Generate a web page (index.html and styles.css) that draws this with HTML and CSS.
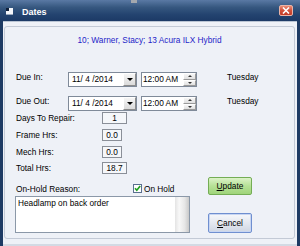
FILE: index.html
```html
<!doctype html>
<html>
	<head>
		<meta charset="utf-8">
		<title>Dates</title>
		<link rel="stylesheet" href="styles.css">
	</head>
	<body>
		<div class="window">
			<div class="notch"></div>
			<div class="titlebar">
				<svg class="app-icon" width="7" height="7" viewBox="0 0 7 7">
					<rect x="0" y="0" width="7" height="7" fill="#f4f6fa"/>
					<rect x="0" y="0" width="3" height="3" fill="#10203a"/>
					<rect x="0" y="6" width="7" height="1" fill="#9aa8bc"/>
				</svg>
				<span class="title">Dates</span>
				<span class="close">
					<svg width="8" height="7" viewBox="0 0 8 7">
						<path d="M1 0.5 L7 6.5 M7 0.5 L1 6.5" stroke="#fff" stroke-width="1.6"/>
					</svg>
				</span>
			</div>
			<div class="client">
				<div class="group">
					<div class="header">10; Warner, Stacy; 13 Acura ILX Hybrid</div>
					<div class="form">
						<div class="due-row">
							<span class="label">Due In:</span>
							<div class="combo">
								<span class="combo-text">11/ 4 /2014</span>
								<span class="drop"><i></i></span>
							</div>
							<div class="timebox">
								<span class="combo-text">12:00 AM</span>
								<span class="spin"><span class="up"><i></i></span><span class="down"><i></i></span></span>
							</div>
							<span class="day">Tuesday</span>
						</div>
						<div class="due-row second">
							<span class="label">Due Out:</span>
							<div class="combo">
								<span class="combo-text">11/ 4 /2014</span>
								<span class="drop"><i></i></span>
							</div>
							<div class="timebox">
								<span class="combo-text">12:00 AM</span>
								<span class="spin"><span class="up"><i></i></span><span class="down"><i></i></span></span>
							</div>
							<span class="day">Tuesday</span>
						</div>
						<div class="lower">
							<div class="stats">
								<div class="stat days">
									<span class="stat-label">Days To Repair:</span>
									<span class="value">1</span>
								</div>
								<div class="stat frame">
									<span class="stat-label">Frame Hrs:</span>
									<span class="value narrow">0.0</span>
								</div>
								<div class="stat mech">
									<span class="stat-label">Mech Hrs:</span>
									<span class="value narrow">0.0</span>
								</div>
								<div class="stat total">
									<span class="stat-label">Total Hrs:</span>
									<span class="value">18.7</span>
								</div>
								<div class="onhold-row">
									<span class="onhold-label">On-Hold Reason:</span>
									<svg class="check" width="9" height="9" viewBox="0 0 9 9">
										<rect x="0.5" y="0.5" width="8" height="8" fill="#fff" stroke="#5a7090"/>
										<path d="M2 4.2 L3.8 6.2 L7.2 2" fill="none" stroke="#21a121" stroke-width="1.7"/>
									</svg>
									<span class="check-text">On Hold</span>
								</div>
								<div class="note">
									<span class="note-text">Headlamp on back order</span>
									<span class="scroll"></span>
								</div>
							</div>
							<div class="buttons">
								<div class="btn update"><u>U</u>pdate</div>
								<div class="btn cancel"><u>C</u>ancel</div>
							</div>
						</div>
					</div>
				</div>
			</div>
		</div>
	</body>
</html>
```
FILE: styles.css
```css
body {
	margin: 0;
	font-family: "Liberation Sans", Arial, sans-serif;
	font-size: 8.3px;
	color: #000;
}

.window {
	position: relative;
	width: 300px;
	height: 246px;
	background-color: #1e3b64;
	overflow: hidden;
}

.notch {
	position: absolute;
	left: 131px;
	top: 0px;
	width: 6px;
	height: 3px;
	background-color: #a4a8ae;
}

.titlebar {
	height: 21px;
	display: flex;
	align-items: flex-start;
	padding-left: 6px;
	box-sizing: border-box;
	background: linear-gradient(#5a79a4, #36577f 35%, #23436f 70%, #1c3a66);
}

.app-icon {
	margin-top: 8px;
}

.title {
	margin-left: 9px;
	margin-top: 7px;
	line-height: 11px;
	font-size: 9px;
	font-weight: bold;
	color: #fff;
}

.close {
	margin-left: auto;
	margin-right: 7px;
	margin-top: 5px;
	width: 14px;
	height: 11px;
	box-sizing: border-box;
	border: 1px solid #e9b4a8;
	border-radius: 2px;
	background: linear-gradient(#e88a74, #d0503a 50%, #c13a26);
	display: flex;
	align-items: center;
	justify-content: center;
}

.client {
	margin: 0 3px;
	height: 225px;
	box-sizing: border-box;
	border-top: 1px solid #b9c4d3;
	padding: 4px 2px 0 1px;
	background-color: #eef1f7;
	box-shadow: inset 0 -2px 0 #d3dae4;
}

.group {
	height: 213px;
	box-sizing: border-box;
	border: 1px solid #c3cad6;
	border-radius: 3px;
}

.header {
	margin-top: 8px;
	line-height: 11px;
	text-align: center;
	color: #2424c8;
}

.form {
	padding-left: 11px;
}

.due-row {
	display: flex;
	align-items: flex-start;
	height: 15px;
	margin-top: 26px;
}

.due-row.second {
	margin-top: 9px;
}

.label {
	width: 52px;
	line-height: 11px;
}

.combo, .timebox {
	display: flex;
	height: 15px;
	box-sizing: border-box;
	border: 1px solid #7f8a99;
	background-color: #fff;
}

.combo {
	width: 69px;
}

.timebox {
	width: 56px;
	margin-left: 4px;
}

.combo-text {
	flex: 1;
	padding-left: 3px;
	line-height: 13px;
	white-space: nowrap;
}

.timebox .combo-text {
	padding-left: 1px;
}

.drop {
	width: 13px;
	height: 13px;
	box-sizing: border-box;
	border: 1px solid;
	border-color: #fff #8c8c8c #8c8c8c #fff;
	background: linear-gradient(#f6f6f6, #dadada);
	display: flex;
	align-items: center;
	justify-content: center;
}

.drop i {
	width: 0;
	height: 0;
	border-top: 3px solid #000;
	border-left: 3px solid transparent;
	border-right: 3px solid transparent;
}

.spin {
	width: 13px;
	height: 13px;
	display: flex;
	flex-direction: column;
}

.spin .up, .spin .down {
	flex: 1;
	box-sizing: border-box;
	border: 1px solid;
	border-color: #fff #9a9a9a #9a9a9a #fff;
	background: linear-gradient(#f7f7f7, #e0e0e0);
	display: flex;
	align-items: center;
	justify-content: center;
}

.spin .up i {
	border-bottom: 2px solid #333;
	border-left: 2px solid transparent;
	border-right: 2px solid transparent;
}

.spin .down i {
	border-top: 2px solid #333;
	border-left: 2px solid transparent;
	border-right: 2px solid transparent;
}

.day {
	margin-left: 30px;
	line-height: 11px;
}

.lower {
	display: flex;
}

.stats {
	width: 173px;
}

.stat {
	display: flex;
	align-items: center;
	height: 12px;
	line-height: 12px;
}

.stat.days {
	margin-top: 1px;
}

.stat.frame, .stat.mech {
	margin-top: 5px;
}

.stat.total {
	margin-top: 4px;
}

.stat-label {
	width: 86px;
}

.value {
	width: 25px;
	height: 12px;
	box-sizing: border-box;
	border: 1px solid #8a8f98;
	background-color: #f5f7fa;
	line-height: 10px;
	text-align: center;
}

.value.narrow {
	width: 20px;
}

.onhold-row {
	display: flex;
	align-items: flex-start;
	margin-top: 10px;
	line-height: 11px;
}

.onhold-label {
	width: 117px;
}

.check {
	margin-top: 0px;
}

.check-text {
	margin-left: 2px;
}

.note {
	display: flex;
	margin-top: 1px;
	margin-left: -1px;
	width: 175px;
	height: 37px;
	box-sizing: border-box;
	border: 1px solid #8b98a8;
	background-color: #fff;
}

.note-text {
	flex: 1;
	padding: 1px 0 0 2px;
	line-height: 11px;
}

.scroll {
	width: 14px;
	background: linear-gradient(to right, #e4e4e4, #f8f8f8 30%, #e6e6e6 70%, #c9c9c9);
}

.buttons {
	margin-left: 19px;
	padding-top: 66px;
}

.btn {
	width: 44px;
	box-sizing: border-box;
	border-radius: 2px;
	display: flex;
	align-items: center;
	justify-content: center;
}

.btn.update {
	height: 18px;
	border: 1px solid #74ad55;
	background: linear-gradient(#dcf2c8, #b6e196 50%, #9fd47a);
}

.btn.cancel {
	height: 20px;
	margin-top: 18px;
	border: 1px solid #6f8fd0;
	background: linear-gradient(#f7f8fb, #e4e8f0 50%, #cfd6e2);
	box-shadow: inset 0 0 0 1px #c8d6f2;
}
```
